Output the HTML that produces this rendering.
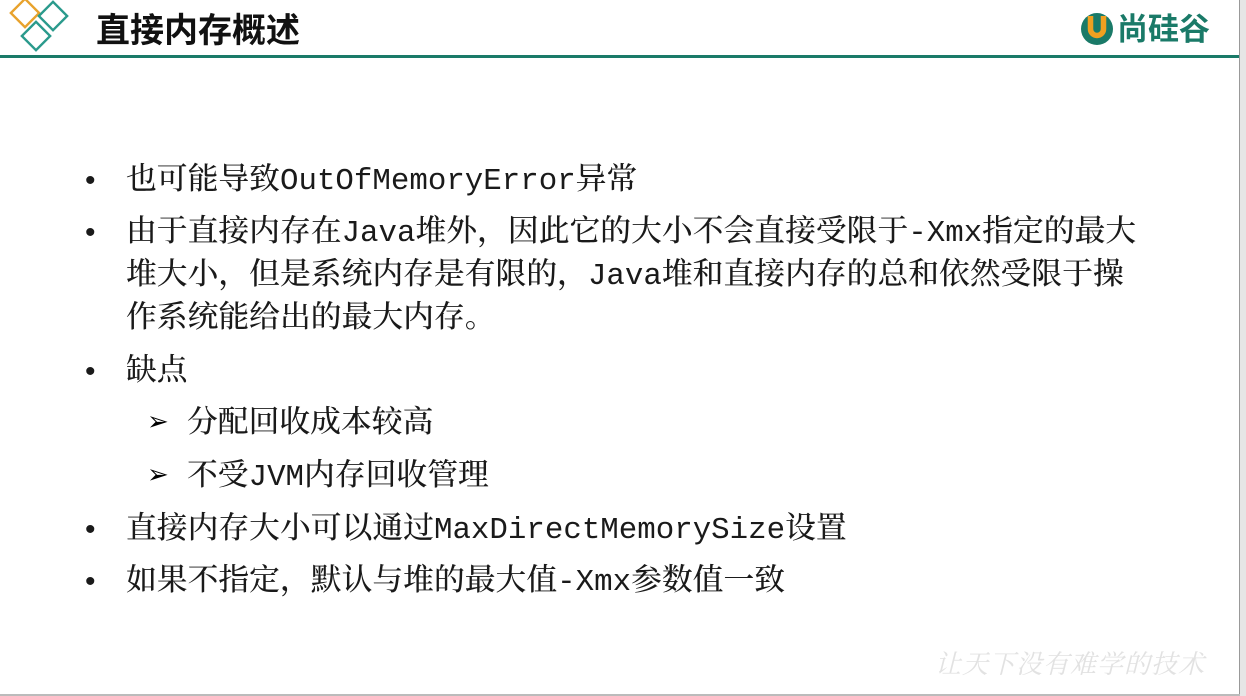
<!DOCTYPE html>
<html><head><meta charset="utf-8"><style>
*{margin:0;padding:0}
body{width:1246px;height:696px;background:#fff;position:relative;overflow:hidden;font-family:"Liberation Mono","Noto Serif CJK SC",monospace;color:#1a1a1a}
.t{position:absolute;white-space:nowrap;font-size:30.8px;line-height:31px;font-family:"Liberation Mono","Noto Serif CJK SC",monospace;font-weight:500}
.b{position:absolute;left:85px;font-size:30px;line-height:30px;font-family:"Liberation Sans",sans-serif}
.a{position:absolute;left:147px;font-size:26px;line-height:26px;font-family:"DejaVu Sans",sans-serif;font-weight:bold;color:#000}
</style></head><body>
<svg style="position:absolute;left:6px;top:0" width="64" height="58" viewBox="0 0 64 58">
<rect x="9" y="3" width="20" height="20" transform="rotate(45 19 13)" fill="none" stroke="#e8a22c" stroke-width="2.4"/>
<rect x="37" y="6" width="20" height="20" transform="rotate(45 47 16)" fill="none" stroke="#2a9a8c" stroke-width="2.4"/>
<rect x="20" y="26" width="20" height="20" transform="rotate(45 30 36)" fill="none" stroke="#2a9a8c" stroke-width="2.4"/>
</svg>
<div style="position:absolute;left:96px;top:8px;font-size:34px;font-weight:bold;font-family:'Noto Sans CJK SC',sans-serif;line-height:40px;color:#111">直接内存概述</div>
<svg style="position:absolute;left:1079px;top:10px" width="38" height="38" viewBox="0 0 38 38">
<circle cx="18" cy="19" r="16" fill="#1a7a68"/>
<path d="M11.5 6 V19 a6.5 6.5 0 0 0 13 0 V6" fill="none" stroke="#f0a020" stroke-width="5.5"/>
</svg>
<div style="position:absolute;left:1117px;top:9px;font-size:31px;font-weight:bold;color:#1a7a68;font-family:'Noto Sans CJK SC',sans-serif;line-height:36px">尚硅谷</div>
<div style="position:absolute;left:0;top:55px;width:1240px;height:3px;background:#1a7a68"></div>
<div style="position:absolute;left:1239px;top:0;width:1px;height:696px;background:#999"></div>
<div style="position:absolute;left:1240px;top:0;width:6px;height:696px;background:#e6e6e6"></div>
<div style="position:absolute;left:0;top:694px;width:1240px;height:2px;background:#bbb"></div>

<div class="b" style="top:166px">•</div><div class="t" style="left:126px;top:166px">也可能导致OutOfMemoryError异常</div>
<div class="b" style="top:218px">•</div><div class="t" style="left:126px;top:218px">由于直接内存在Java堆外，因此它的大小不会直接受限于-Xmx指定的最大</div>
<div class="t" style="left:126px;top:261px">堆大小，但是系统内存是有限的，Java堆和直接内存的总和依然受限于操</div>
<div class="t" style="left:126px;top:304px">作系统能给出的最大内存。</div>
<div class="b" style="top:357px">•</div><div class="t" style="left:126px;top:357px">缺点</div>
<div class="a" style="top:409px">➢</div><div class="t" style="left:187px;top:409px">分配回收成本较高</div>
<div class="a" style="top:462px">➢</div><div class="t" style="left:187px;top:462px">不受JVM内存回收管理</div>
<div class="b" style="top:515px">•</div><div class="t" style="left:126px;top:515px">直接内存大小可以通过MaxDirectMemorySize设置</div>
<div class="b" style="top:567px">•</div><div class="t" style="left:126px;top:567px">如果不指定，默认与堆的最大值-Xmx参数值一致</div>

<div style="position:absolute;left:935px;top:648px;font-size:26px;line-height:30px;color:#e2e2e2;font-style:italic;font-family:'Noto Serif CJK SC',serif;letter-spacing:1px">让天下没有难学的技术</div>
</body></html>
